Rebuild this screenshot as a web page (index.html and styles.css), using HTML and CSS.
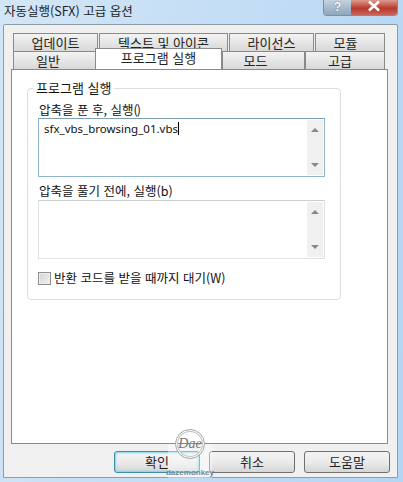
FILE: index.html
```html
<!DOCTYPE html>
<html lang="ko">
<head>
    <meta charset="UTF-8">
    <title>자동실행(SFX) 고급 옵션</title>
    <link rel="stylesheet" href="styles.css">
</head>
<body>

<div class="window">
    <div class="titlebar">
        <div class="title">자동실행(SFX) 고급 옵션</div>
        <div class="caption-buttons">
            <div class="caption-help">?</div>
            <div class="caption-close">
                <svg width="14" height="12" viewBox="0 0 14 12"><path d="M2 1.5 L12 10.5 M12 1.5 L2 10.5" stroke="#fff" stroke-width="2.6"/></svg>
            </div>
        </div>
    </div>

    <div class="client">
        <div class="tabs">
            <div class="tab-row">
                <div class="tab tab-update">업데이트</div>
                <div class="tab tab-text">텍스트 및 아이콘</div>
                <div class="tab tab-license">라이선스</div>
                <div class="tab tab-module">모듈</div>
            </div>
            <div class="tab-row tab-row-front">
                <div class="tab tab-general">일반</div>
                <div class="tab tab-active">프로그램 실행</div>
                <div class="tab tab-mode">모드</div>
                <div class="tab tab-advanced">고급</div>
            </div>
        </div>

        <div class="page">
            <fieldset class="group">
                <legend>프로그램 실행</legend>
                <label class="field-label">압축을 푼 후, 실행<span class="narrow">()</span></label>
                <div class="textbox textbox-active">
                    <div class="textbox-text">sfx_vbs_browsing_01.vbs<span class="caret"></span></div>
                    <div class="scrollbar"><span class="arrow-up"></span><span class="arrow-down"></span></div>
                </div>
                <label class="field-label field-label-2">압축을 풀기 전에, 실행(b)</label>
                <div class="textbox">
                    <div class="textbox-text"></div>
                    <div class="scrollbar"><span class="arrow-up"></span><span class="arrow-down"></span></div>
                </div>
                <div class="check-row">
                    <span class="checkbox"></span>
                    <span>반환 코드를 받을 때까지 대기(W)</span>
                </div>
            </fieldset>
        </div>

        <div class="buttons">
            <div class="btn btn-default">확인</div>
            <div class="btn">취소</div>
            <div class="btn">도움말</div>
        </div>

        <div class="watermark">
            <div class="watermark-circle">Dae</div>
            <div class="watermark-text">dazemonkey</div>
        </div>
    </div>
</div>

</body>
</html>
```

FILE: styles.css
```css
html, body {
    margin: 0;
    padding: 0;
}
body {
    width: 403px;
    height: 482px;
    overflow: hidden;
    font-family: "Noto Sans CJK KR", "Liberation Sans", sans-serif;
    font-size: 12px;
    color: #111;
}
.window {
    width: 403px;
    height: 482px;
    box-sizing: border-box;
    padding: 0 5px 4px 3px;
    background: linear-gradient(100deg, #d3e6f6 0%, #c4def5 45%, #b4d5f3 100%);
}
.titlebar {
    height: 24px;
    display: flex;
    justify-content: space-between;
}
.title {
    margin: 2px 0 0 1px;
    font-size: 12.5px;
    line-height: 17px;
    color: #222;
}
.caption-buttons {
    display: flex;
    height: 15px;
    border: 1px solid #7d8ea0;
    border-top: none;
    border-radius: 0 0 4px 4px;
    overflow: hidden;
}
.caption-help {
    width: 27px;
    background: linear-gradient(#c3d2e0, #8fa5ba);
    color: #fff;
    font: bold 13px/14px "Liberation Sans", sans-serif;
    text-align: center;
    text-shadow: 0 0 1px #334;
}
.caption-close {
    width: 46px;
    background: linear-gradient(#dd9a8e, #b9392c 55%, #c8655a);
    text-align: center;
    line-height: 13px;
}
.client {
    position: relative;
    height: 454px;
    box-sizing: border-box;
    padding: 8px 0 0 7px;
    background: #f0f0f0;
    border: 1px solid #8f9ca8;
    border-radius: 2px 2px 0 0;
}
.tabs {
    height: 36px;
}
.tab-row {
    display: flex;
    height: 18px;
    padding-left: 2px;
}
.tab {
    box-sizing: border-box;
    height: 18px;
    margin-right: 1px;
    background: linear-gradient(#f3f3f3, #e6e6e6 50%, #d8d8d8);
    border: 1px solid #8a8a8a;
    border-bottom: none;
    text-align: center;
    line-height: 17px;
    font-size: 13px;
    color: #222;
}
.tab-row-front .tab {
    margin-right: 0;
}
.tab-update { width: 85px; }
.tab-text { width: 129px; }
.tab-license { width: 85px; }
.tab-module { width: 70px; padding-right: 9px; }
.tab-general { width: 83px; padding-right: 13px; }
.tab-mode { width: 83px; padding-right: 16px; }
.tab-advanced { width: 80px; padding-right: 10px; }
.tab-active {
    width: 127px;
    height: 21px;
    margin: -3px -1px 0 -1px;
    background: #fff;
    position: relative;
    z-index: 2;
}
.page {
    width: 377px;
    height: 375px;
    box-sizing: border-box;
    padding: 10px 0 0 15px;
    background: #fff;
    border: 1px solid #8a8a8a;
}
.group {
    width: 314px;
    height: 220px;
    box-sizing: border-box;
    margin: 0;
    padding: 0 0 0 10px;
    border: 1px solid #dcdfe2;
    border-radius: 4px;
}
.group legend {
    margin-left: -5px;
    padding: 0 3px;
    font-size: 13px;
    line-height: 16px;
}
.field-label {
    display: block;
    margin-top: 6px;
    font-size: 12.5px;
    line-height: 16px;
    height: 16px;
    padding-left: 1px;
}
.field-label-2 {
    height: 17px;
}
.narrow {
    letter-spacing: -1px;
}
.textbox {
    width: 287px;
    height: 59px;
    box-sizing: border-box;
    display: flex;
    justify-content: space-between;
    border: 1px solid #dde2e6;
    border-top-color: #c9ced3;
}
.textbox-active {
    border-color: #8fb4cc;
    border-top-color: #7ca0b8;
}
.textbox-text {
    padding: 2px 0 0 5px;
    font-family: "Noto Sans", "Liberation Sans", sans-serif;
    font-size: 11.5px;
    line-height: 15px;
}
.caret {
    display: inline-block;
    width: 1px;
    height: 13px;
    background: #000;
    vertical-align: -2px;
}
.scrollbar {
    width: 16px;
    margin: 1px 1px 1px 0;
    background: #f0f0f0;
    display: flex;
    flex-direction: column;
    justify-content: space-between;
    align-items: center;
    padding: 8px 0;
    box-sizing: border-box;
}
.arrow-up {
    border: 4px solid transparent;
    border-top: none;
    border-bottom: 4px solid #85898e;
}
.arrow-down {
    border: 4px solid transparent;
    border-bottom: none;
    border-top: 4px solid #85898e;
}
.check-row {
    display: flex;
    align-items: center;
    gap: 3px;
    margin-top: 11px;
    font-size: 12.5px;
    line-height: 16px;
}
.checkbox {
    width: 13px;
    height: 13px;
    box-sizing: border-box;
    border: 1px solid #8e8f8f;
    background: linear-gradient(135deg, #d4d4d4, #f2f2f2);
    box-shadow: inset 0 0 0 1px #eee;
}
.buttons {
    display: flex;
    justify-content: flex-end;
    gap: 9px;
    margin: 7px 7px 0 0;
}
.btn {
    width: 86px;
    height: 22px;
    box-sizing: border-box;
    border: 1px solid #707070;
    border-radius: 3px;
    background: linear-gradient(#f4f4f4, #ebebeb 50%, #d6d6d6);
    text-align: center;
    font-size: 13px;
    line-height: 19px;
    color: #222;
}
.btn-default {
    border-color: #3c8ea8;
    box-shadow: inset 0 0 2px 1px #7fd3ea;
}
.watermark {
    position: absolute;
    left: 164px;
    top: 404px;
    width: 44px;
    height: 49px;
    display: flex;
    flex-direction: column;
    align-items: center;
    background: linear-gradient(transparent 30%, rgba(255, 255, 255, 0.4) 30%);
}
.watermark-circle {
    width: 30px;
    height: 30px;
    box-sizing: border-box;
    border: 1px solid #a8a8a8;
    border-radius: 50%;
    box-shadow: inset 0 0 0 1px #fff, inset 0 0 0 2px #c4c4c4;
    font: italic 14px/27px "Liberation Serif", serif;
    color: #777;
    text-align: center;
}
.watermark-text {
    margin-top: 9px;
    font: bold 8px/9px "Liberation Sans", sans-serif;
    color: #6f8796;
    white-space: nowrap;
}
```
